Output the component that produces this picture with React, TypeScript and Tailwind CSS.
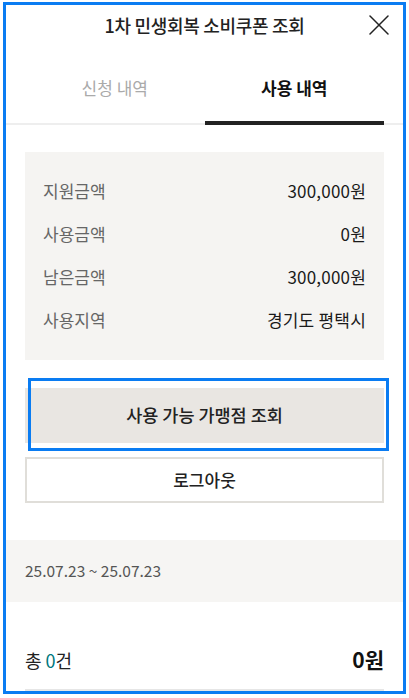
import React from 'react';

const rows = [
  { label: '지원금액', value: '300,000원' },
  { label: '사용금액', value: '0원' },
  { label: '남은금액', value: '300,000원' },
  { label: '사용지역', value: '경기도 평택시' },
];

export default function App() {
  return (
    <div className="w-[409px] h-[698px] bg-white pt-[2px] pl-[3px] font-['Noto_Sans_CJK_KR','Noto_Sans',sans-serif]">
      <div className="relative w-[403px] h-[692px] border-[3px] border-[#0a7cf2] overflow-hidden bg-white">
        {/* Header */}
        <div className="grid grid-cols-[48px_1fr_48px] items-center h-[40px]">
          <div />
          <h1 className="text-center text-[18px] font-medium text-[#222] tracking-[-0.3px]">1차 민생회복 소비쿠폰 조회</h1>
          <button className="flex justify-end pr-[14px]">
            <svg width="20" height="20" viewBox="0 0 20 20" fill="none" stroke="#222" strokeWidth="1.5" strokeLinecap="round">
              <path d="M1 1L19 19M19 1L1 19" />
            </svg>
          </button>
        </div>

        {/* Tabs */}
        <div className="mt-[6px] h-[74px] border-b-2 border-[#eeeeee] px-[19px] flex items-start">
          <div className="flex-1 h-[72px] pt-[2px] flex items-center justify-center text-[17px] text-[#aaaaaa]">신청 내역</div>
          <div className="flex-1 h-[74px] pt-[4px] border-b-4 border-[#222] flex items-center justify-center text-[17px] font-bold text-[#111]">사용 내역</div>
        </div>

        {/* Info box */}
        <div className="mx-[19px] mt-[27px] bg-[#f5f4f2] px-[18px] pt-[17px] pb-[19px]">
          {rows.map((r) => (
            <div key={r.label} className="h-[43px] flex items-center justify-between text-[17px]">
              <span className="text-[#666]">{r.label}</span>
              <span className="text-[#1a1a1a] tracking-[0.2px]">{r.value}</span>
            </div>
          ))}
        </div>

        {/* Buttons */}
        <div className="mx-[19px] mt-[28px] flex flex-col gap-[14px]">
          <button className="h-[55px] bg-[#e9e6e2] text-[17.5px] font-medium text-[#222]">사용 가능 가맹점 조회</button>
          <button className="h-[46px] border-2 border-[#e0ded9] bg-white text-[17px] font-medium text-[#222]">로그아웃</button>
        </div>

        {/* Period */}
        <div className="mt-[37px] h-[62px] bg-[#f6f5f3] px-[19px] flex items-center text-[15.5px] text-[#555]">
          25.07.23 ~ 25.07.23
        </div>

        {/* Summary */}
        <div className="mx-[19px] mt-[38px] h-[40px] flex items-center justify-between">
          <span className="text-[18px] text-[#222]">
            총 <span className="text-[#00777d]">0</span>건
          </span>
          <span className="text-[21px] font-bold text-[#111]">0원</span>
        </div>
        <div className="mx-[19px] mt-[9px] h-[4px] bg-[#e6e6e6]" />

        {/* Highlight annotation */}
        <div className="absolute left-[22px] top-[373px] w-[361px] h-[73px] border-[3px] border-[#0a7cf2] pointer-events-none" />
      </div>
    </div>
  );
}
